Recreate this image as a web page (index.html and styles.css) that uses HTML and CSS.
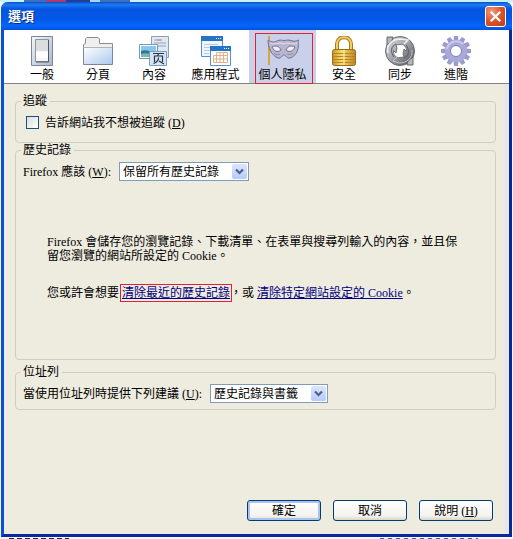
FILE: index.html
```
<!DOCTYPE html>
<html lang="zh-Hant">
<head>
    <meta charset="UTF-8">
    <meta name="viewport" content="width=device-width, initial-scale=1.0">
    <title>選項</title>
    <link rel="stylesheet" href="styles.css">
</head>
<body>
    <main class="window">
        <header class="titlebar">
            <h1 class="title">選項</h1>
            <button type="button" class="close" aria-label="關閉">
                <svg viewBox="0 0 18 18" aria-hidden="true"><path d="M4.5 4.5l9 9M13.5 4.5l-9 9" stroke="#fff" stroke-width="2.2"/></svg>
            </button>
        </header>

        <!-- Categorías -->
        <nav class="toolbar">
            <button type="button" class="tab">
                <svg class="icon" viewBox="0 0 30 30" aria-hidden="true">
                    <defs><linearGradient id="plate" x2="1" y2="1"><stop offset="0" stop-color="#f4f7fa"/><stop offset="1" stop-color="#a9b9cb"/></linearGradient></defs>
                    <path d="M4.5.5h21v29h-21z" fill="url(#plate)" stroke="#77889b"/>
                    <path d="M8.5 3.5h13v22h-13z" fill="#f6f6f4" stroke="#8c969f"/>
                    <path d="M9 4h12v11H9z" fill="#dcdedd"/>
                    <path d="M9 16h12v6H9z" fill="#fff"/>
                    <path d="M21.5 4v22H9" fill="none" stroke="#4d5b69"/>
                </svg>
                <span>一般</span>
            </button>
            <button type="button" class="tab">
                <svg class="icon" viewBox="0 0 30 30" aria-hidden="true">
                    <defs><linearGradient id="folder" x2="1" y2="1"><stop offset="0" stop-color="#fff"/><stop offset="1" stop-color="#a9c8ee"/></linearGradient></defs>
                    <path d="M.5 11V8.5l2-1V3L4 1.500h11L16.500 3v4.500h13V12" fill="#efefef" stroke="#8c8c8c"/>
                    <path d="M.5 11.500h29v17H.5z" fill="url(#folder)" stroke="#7d8894"/>
                    <path d="M1 11.500h28" stroke="#b4b4b4"/>
                </svg>
                <span>分頁</span>
            </button>
            <button type="button" class="tab">
                <svg class="icon" viewBox="0 0 30 30" aria-hidden="true">
                    <path d="M12.500.5h17v21h-17z" fill="#e0e9f3" stroke="#8ca0b8"/>
                    <path d="M15 4h7M15 7h12M15 10h12" stroke="#90a5bd"/>
                    <path d="M18 4h5" stroke="#d08a78"/>
                    <path d="M.5 8.500h18v14H.5z" fill="#fff" stroke="#6d98c4"/>
                    <path d="M2 10h15v11H2z" fill="#8bc7ea"/>
                    <path d="M2 15c5-2 8 1 15 0v6H2z" fill="#2877a9"/>
                    <path d="M2 18c5-2 10 1 15-1v4H2z" fill="#83b6a3"/>
                    <path d="M10.500 15.500h17v14h-17z" fill="#d4e3f5" stroke="#7d9cbd"/>
                    <path d="M14 17.500h11M19.500 18l-1 2M15.500 26v-6h8v6M19.500 21.500c0 4-2 5-5 6M20 25l5 3" fill="none" stroke="#2b3440" stroke-width="1.2"/>
                </svg>
                <span>內容</span>
            </button>
            <button type="button" class="tab tab-wide">
                <svg class="icon" viewBox="0 0 30 30" aria-hidden="true">
                    <path d="M.5.5h21v20H.5z" fill="#eef5fd" stroke="#5590cb"/>
                    <path d="M0 0h22v5H0z" fill="#2675c4"/>
                    <path d="M15 2.500h1M17 2.500h1M19 2.500h1" stroke="#fff"/>
                    <path d="M3 8.500h14M3 11.500h16M3 14.500h7M3 17.500h5" stroke="#bacbe1"/>
                    <path d="M9.500 10.500h20v19h-20z" fill="#fff" stroke="#5590cb"/>
                    <path d="M9 10h21v5H9z" fill="#2675c4"/>
                    <path d="M23 12.500h1M25 12.500h1M27 12.500h1" stroke="#fff"/>
                    <path d="M15.500 16.500h11v10h-14v-7h14M12.500 23h14M15.500 16.500v10M19 16.500v10M22.500 16.500v10" fill="none" stroke="#e3b08c"/>
                </svg>
                <span>應用程式</span>
            </button>
            <button type="button" class="tab tab-wide tab-active" aria-pressed="true">
                <svg class="icon" viewBox="0 0 32 30" aria-hidden="true">
                    <path d="M2 0v29" stroke="#d9a33f" stroke-width="2"/>
                    <path d="M1 4C5 7 8 6 11 4.500c3-1 4 0 6 0s4-1 7 0c3 1 5 1 8-.5 0 8-2 16-9 18-3 1-4-3-6-3s-3 4-6 3C5 20 1 12 1 4z" fill="#b9b5d0" stroke="#77738e"/>
                    <path d="M3 7c4 2 7 0 10 0 3 1 5 1 7 0 3 0 6 2 10 0" fill="none" stroke="#e6e3f0"/>
                    <path d="M5 11c4-2 7-1 9 3-4 3-7 1-9-3zM28 11c-4-2-7-1-9 3 4 3 7 1 9-3z" fill="#eeeef8" stroke="#716d88"/>
                    <path d="M7 17c2 2 4 2 6 1M20 18c3 1 5 0 6-1" fill="none" stroke="#928da8"/>
                </svg>
                <span>個人隱私</span>
            </button>
            <button type="button" class="tab">
                <svg class="icon" viewBox="0 0 30 30" aria-hidden="true">
                    <defs><linearGradient id="brass"><stop offset="0" stop-color="#c89420"/><stop offset=".4" stop-color="#f9dc70"/><stop offset="1" stop-color="#bd8520"/></linearGradient></defs>
                    <path d="M8 15V8c0-9 14-9 14 0v7" fill="none" stroke="#a77a1c" stroke-width="4"/>
                    <path d="M8 15V8c0-9 14-9 14 0v7" fill="none" stroke="#f1d064" stroke-width="2"/>
                    <rect x="3.5" y="13.5" width="23" height="16" rx="2" fill="url(#brass)" stroke="#9b6c19"/>
                    <path d="M4 17.500h22M4 20.500h22M4 23.500h22M4 26.500h22" stroke="#b78325"/>
                    <path d="M15 14v15" stroke="#fff0a0" stroke-width="2" opacity=".6"/>
                </svg>
                <span>安全</span>
            </button>
            <button type="button" class="tab">
                <svg class="icon" viewBox="0 0 30 30" aria-hidden="true">
                    <defs><linearGradient id="steel" x2="1" y2="1"><stop offset="0" stop-color="#d9dcdf"/><stop offset=".5" stop-color="#a0a4a8"/><stop offset="1" stop-color="#484b4f"/></linearGradient></defs>
                    <circle cx="15" cy="15" r="14.5" fill="url(#steel)" stroke="#65696e"/>
                    <path d="M2 1h6l-1 4-5 4zM28 29h-6l1-4 5-4z" fill="#b4b8bc" stroke="#65696e"/>
                    <path d="M15 8.500c4-1 7 3 6.500 7L19 13l-1 5 1 3-4 .5c-4 1-7-3-6.500-7L11 17l1-5-1-3z" fill="#fff" stroke="#70757a"/>
                    <path d="M3 17C1 9 7 3 16 3l7 1-4 4" fill="none" stroke="#f0f2f4" stroke-width="1.5"/>
                    <path d="M27 14c1 8-5 13-13 13l-6-2 4-4" fill="none" stroke="#c3c7ca"/>
                    <path d="M9 21c-4-5-3-11 2-13M21 9c4 5 3 11-2 13" fill="none" stroke="#585c61"/>
                </svg>
                <span>同步</span>
            </button>
            <button type="button" class="tab">
                <svg class="icon" viewBox="0 0 30 30" aria-hidden="true">
                    <g fill="#9c9bce">
                        <path id="tooth" d="M12.500 5l.5-5h4l.5 5v20l-.5 5h-4l-.5-5z"/>
                        <use href="#tooth" transform="rotate(30 15 15)"/>
                        <use href="#tooth" transform="rotate(60 15 15)"/>
                        <use href="#tooth" transform="rotate(90 15 15)"/>
                        <use href="#tooth" transform="rotate(120 15 15)"/>
                        <use href="#tooth" transform="rotate(150 15 15)"/>
                    </g>
                    <circle cx="15" cy="15" r="8" fill="#fff" stroke="#a9a9da" stroke-width="6"/>
                    <circle cx="15" cy="15" r="5.5" fill="#fff" stroke="#7f7eb5"/>
                    <path d="M6 13a9.500 9.500 0 0 1 16-5" fill="none" stroke="#c9c8ed" stroke-width="2"/>
                </svg>
                <span>進階</span>
            </button>
        </nav>

        <form class="pane">
            <fieldset class="group">
                <legend>追蹤</legend>
                <div class="row">
                    <input type="checkbox" id="no-track" class="check">
                    <label for="no-track">告訴網站我不想被追蹤 (<u>D</u>)</label>
                </div>
            </fieldset>

            <fieldset class="group group-history">
                <legend>歷史記錄</legend>
                <div class="row">
                    <label for="history">Firefox 應該 (<u>W</u>):</label>
                    <span class="dropdown">
                        <select id="history"><option>保留所有歷史記錄</option></select>
                        <svg class="arrow" viewBox="0 0 15 15" aria-hidden="true"><path d="M4 5.500l3.500 3.500L11 5.500" fill="none" stroke="#4d6185" stroke-width="2.2"/></svg>
                    </span>
                </div>
                <div class="description">
                    <p>Firefox 會儲存您的瀏覽記錄、下載清單、在表單與搜尋列輸入的內容，並且保留您瀏覽的網站所設定的 Cookie。</p>
                    <p>您或許會想要 <a href="#" class="marked">清除最近的歷史記錄</a>，或 <a href="#">清除特定網站設定的 Cookie</a>。</p>
                </div>
            </fieldset>

            <fieldset class="group group-location">
                <legend>位址列</legend>
                <div class="row">
                    <label for="suggest">當使用位址列時提供下列建議 (<u>U</u>):</label>
                    <span class="dropdown">
                        <select id="suggest"><option>歷史記錄與書籤</option></select>
                        <svg class="arrow" viewBox="0 0 15 15" aria-hidden="true"><path d="M4 5.500l3.500 3.500L11 5.500" fill="none" stroke="#4d6185" stroke-width="2.2"/></svg>
                    </span>
                </div>
            </fieldset>

            <div class="actions">
                <button type="button" class="btn btn-default">確定</button>
                <button type="button" class="btn">取消</button>
                <button type="button" class="btn">說明 (<u>H</u>)</button>
            </div>
        </form>
    </main>
</body>
</html>
```
FILE: styles.css
```
* {
    box-sizing: border-box;
}

body {
    margin: 0;
    padding: 2px 1px;
    min-height: 100vh;
    display: flex;
    /* Restos del escritorio que asoman alrededor de la ventana */
    background:
        linear-gradient(90deg, transparent 24px, #3c6fc0 24px 46px, #b03a6a 46px 66px, #1e3f9c 66px 90px, #a9d4f0 90px 100px, #3c6fc0 100px 130px, transparent 130px) top / 100% 2px no-repeat,
        repeating-linear-gradient(90deg, #1c2452 0 5px, #e8eefc 5px 8px) 9px 100% / 60px 1px no-repeat,
        repeating-linear-gradient(90deg, #3a5fd0 0 4px, #e8eefc 4px 8px) 380px 100% / 98px 1px no-repeat,
        linear-gradient(#c8f0f8, #c8f0f8) top / 100% 2px no-repeat,
        #f2f6fd;
    font: 12px/14px "Liberation Serif", "Noto Sans CJK TC", serif;
    color: #000;
}

button, select {
    font: inherit;
    color: inherit;
}

/* Ventana */
.window {
    flex: 1;
    display: flex;
    flex-direction: column;
    border: 3px solid #0a4fd8;
    border-top: 0;
    border-right-color: #0a2a9c;
    border-bottom-color: #0a2a9c;
    border-radius: 7px 7px 0 0;
    background: #eeebdf;
}

.titlebar {
    height: 28px;
    margin: 0 -3px;
    padding: 0 6px 0 7px;
    display: flex;
    align-items: center;
    justify-content: space-between;
    border-radius: 7px 7px 0 0;
    background: linear-gradient(#0a4fc4, #1d7bf5 10%, #0355e0 25%, #0456e6 60%, #0466fb 85%, #0350d8);
}

.title {
    margin: 0;
    padding-top: 2px;
    font-size: 13px;
    line-height: 16px;
    color: #fff;
    text-shadow: 1px 1px #0a2a7c;
}

.close {
    width: 21px;
    height: 21px;
    padding: 0;
    border: 1px solid #fff;
    border-radius: 3px;
    background: radial-gradient(circle at 30% 25%, #f09a80, #e0522c 50%, #c43a14);
}

.close svg {
    display: block;
}

/* Barra de categorías */
.toolbar {
    display: flex;
    padding: 0 10px;
    border-bottom: 1px solid #85837b;
    background: #fff;
}

.tab {
    width: 56px;
    padding: 6px 0 1px;
    display: flex;
    flex-direction: column;
    align-items: center;
    gap: 2px;
    border: 0;
    background: none;
}

.tab-wide {
    width: 67px;
}

.tab-active {
    position: relative;
    background: #c9d0e9;
}

/* Recuadro rojo sobre la categoría activa */
.tab-active::after {
    content: "";
    position: absolute;
    inset: 3px 3px -1px 6px;
    border: 1px solid #e02038;
}

.icon {
    height: 30px;
    width: 30px;
}

.tab-active .icon {
    width: 32px;
}

/* Contenido */
.pane {
    flex: 1;
    display: flex;
    flex-direction: column;
    padding: 10px 13px 13px 11px;
    box-shadow: inset -5px 0 #e9e8e8;
}

.group {
    margin: 0;
    padding: 5px 7px 10px;
    min-width: 0;
    border: 1px solid #d2cebf;
    border-radius: 4px;
}

.group legend {
    margin-left: -2px;
    padding: 0 3px 0 2px;
}

.group-history {
    min-height: 217px;
}

.group-location {
    margin-top: 5px;
    padding-bottom: 6px;
}

.row {
    display: flex;
    align-items: center;
    gap: 8px;
    min-height: 19px;
}

.check {
    appearance: none;
    width: 13px;
    height: 13px;
    margin: 0 -2px 0 3px;
    border: 1px solid #1c5180;
    background: linear-gradient(135deg, #dcdcd7, #fff);
}

.check:checked {
    background: #21a121;
}

.dropdown {
    position: relative;
    display: flex;
}

.dropdown select {
    appearance: none;
    height: 19px;
    padding: 0 28px 0 3px;
    border: 1px solid #7f9db9;
    border-radius: 0;
    background: #fff;
}

.arrow {
    position: absolute;
    top: 2px;
    right: 2px;
    width: 15px;
    height: 15px;
    border-radius: 2px;
    background: linear-gradient(#dbe5fd, #b7cbf8);
    pointer-events: none;
}

.description {
    padding: 54px 28px 0 24px;
}

.description p {
    margin: 0 0 23px;
}

.description a {
    color: #000080;
}

.marked {
    outline: 1px solid #e02038;
    outline-offset: 1px;
}

/* Botones */
.actions {
    margin-top: auto;
    padding-right: 3px;
    display: flex;
    justify-content: flex-end;
    gap: 12px;
}

.btn {
    width: 74px;
    height: 21px;
    padding: 0;
    border: 1px solid #003c74;
    border-radius: 3px;
    background: linear-gradient(#fff, #f3f2ed 80%, #d9d4c8);
}

.btn-default {
    box-shadow: inset 0 0 0 2px #a9c3f2;
}
```
